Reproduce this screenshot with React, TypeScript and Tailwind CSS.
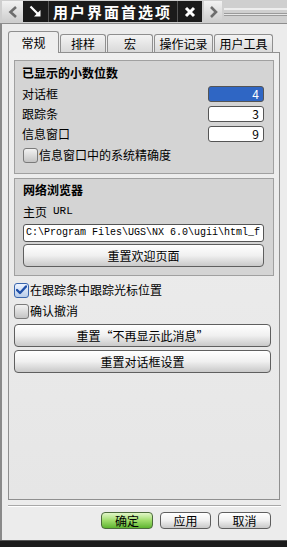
import type { ReactNode } from "react";

const cjk = { fontFamily: '"Noto Sans CJK SC", "Noto Sans", sans-serif' };

function Btn({ children, className = "" }: { children: ReactNode; className?: string }) {
  return (
    <div
      className={`flex items-center justify-center rounded-[4px] border border-[#5f5f5f] bg-gradient-to-b from-[#ffffff] via-[#f0f0f0] to-[#c9c9c9] text-[12px] leading-none text-black shadow-[inset_0_1px_0_#ffffff] ${className}`}
    >
      {children}
    </div>
  );
}

function Check({ checked = false }: { checked?: boolean }) {
  if (checked) {
    return (
      <div className="flex h-[15px] w-[15px] shrink-0 items-center justify-center rounded-[3px] border border-[#3a66ad] bg-gradient-to-b from-[#eef4ff] to-[#b9cde9]">
        <svg width="11" height="10" viewBox="0 0 11 10">
          <path d="M1 5 L4 8 L10 1.5" stroke="#1f4fa8" strokeWidth="2.4" fill="none" strokeLinecap="round" strokeLinejoin="round" />
        </svg>
      </div>
    );
  }
  return (
    <div className="h-[15px] w-[15px] shrink-0 rounded-[3px] border border-[#7a7a7a] bg-gradient-to-b from-[#f2f2f2] to-[#c4c4c4]" />
  );
}

function NumField({ value, selected = false }: { value: string; selected?: boolean }) {
  return (
    <div
      className={`flex h-[16px] w-[56px] items-center justify-end rounded-[3px] border border-[#555] pr-[4px] text-[12px] leading-none ${
        selected ? "bg-[#2f66c4] text-white" : "bg-white text-black"
      }`}
    >
      {value}
    </div>
  );
}

function Tab({ label, w, active = false }: { label: string; w: string; active?: boolean }) {
  return (
    <div
      className={`flex items-center justify-center rounded-t-[3px] border border-b-0 border-[#8f8f8f] text-[12px] leading-none text-black ${w} ${
        active
          ? "relative z-10 -mb-px h-[22px] bg-[#eeeeee]"
          : "h-[18px] bg-gradient-to-b from-[#f4f4f4] to-[#d9d9d9]"
      }`}
    >
      {label}
    </div>
  );
}

export default function App() {
  return (
    <div className="flex h-[547px] w-[287px] flex-col overflow-hidden bg-[#ececec]" style={cjk}>
      {/* title bar */}
      <div className="flex h-[24px] shrink-0 items-center border-b border-[#8d8d8d] bg-[#cfcfcf] pl-[2px]">
        <div className="flex h-[21px] w-[21px] items-center justify-center bg-gradient-to-b from-[#f2f2f2] to-[#cdcdcd]">
          <svg width="10" height="12" viewBox="0 0 10 12">
            <path d="M8 1 L2.5 6 L8 11" stroke="#6d6d6d" strokeWidth="2.6" fill="none" />
          </svg>
        </div>
        <div className="flex h-[21px] items-center bg-[#1b1b1b]">
          <div className="flex w-[24px] items-center justify-center">
            <svg width="13" height="13" viewBox="0 0 13 13">
              <path d="M1.5 1.5 L10 10" stroke="#fff" strokeWidth="2.2" />
              <path d="M5 11.5 L11.5 11.5 L11.5 5 Z" fill="#fff" />
            </svg>
          </div>
          <div className="ml-[1px] h-full w-px bg-[#555]" />
          <span className="w-[128px] pl-[4px] text-[15px] font-bold leading-none tracking-[2px] text-white">
            用户界面首选项
          </span>
          <div className="h-full w-px bg-[#555]" />
          <div className="flex w-[24px] items-center justify-center">
            <svg width="12" height="12" viewBox="0 0 12 12">
              <path d="M2 2 L10 10 M10 2 L2 10" stroke="#fff" strokeWidth="3" />
            </svg>
          </div>
        </div>
        <div className="ml-[2px] flex h-[21px] w-[18px] items-center justify-center bg-gradient-to-b from-[#f2f2f2] to-[#cdcdcd]">
          <svg width="9" height="12" viewBox="0 0 9 12">
            <path d="M2 1 L7 6 L2 11" stroke="#6d6d6d" strokeWidth="2.6" fill="none" />
          </svg>
        </div>
        <div className="ml-[2px] flex h-[21px] flex-1 flex-col justify-center gap-[3px]">
          <div className="h-[2px] bg-[#eeeeee]" />
          <div className="h-[3px] border-y border-[#9a9a9a] bg-[#e6e6e6]" />
        </div>
      </div>

      {/* body */}
      <div className="flex flex-1 flex-col border-l-2 border-[#8a8a8a] pl-[6px]">
        <div className="mt-[7px] flex items-end gap-px">
          <Tab label="常规" w="w-[51px]" active />
          <Tab label="排样" w="w-[46px]" />
          <Tab label="宏" w="w-[46px]" />
          <Tab label="操作记录" w="w-[59px]" />
          <Tab label="用户工具" w="w-[59px]" />
        </div>

        <div className="flex h-[448px] w-[272px] flex-col border border-[#8f8f8f] bg-gradient-to-b from-[#efefef] to-[#e6e6e6] px-[5px] pt-[7px] text-[12px] leading-none text-black">
          {/* decimal places group */}
          <div className="flex h-[114px] flex-col border border-[#a0a0a0] bg-[#d4d4d4] pl-[7px] pr-[9px]">
            <div className="flex h-[23px] items-center font-bold">已显示的小数位数</div>
            <div className="flex h-[20px] items-center justify-between">
              <span>对话框</span>
              <NumField value="4" selected />
            </div>
            <div className="flex h-[20px] items-center justify-between">
              <span>跟踪条</span>
              <NumField value="3" />
            </div>
            <div className="flex h-[20px] items-center justify-between">
              <span>信息窗口</span>
              <NumField value="9" />
            </div>
            <div className="flex h-[22px] items-center gap-[1px] pl-[1px]">
              <Check />
              <span>信息窗口中的系统精确度</span>
            </div>
          </div>

          {/* browser group */}
          <div className="mt-[4px] flex h-[98px] flex-col border border-[#a0a0a0] bg-[#d4d4d4] pl-[8px] pr-[9px]">
            <div className="flex h-[22px] items-center font-bold">网络浏览器</div>
            <div className="flex h-[21px] items-center">
              主页
              <span className="ml-[6px] text-[11px]" style={{ fontFamily: '"Liberation Mono", monospace' }}>
                URL
              </span>
            </div>
            <div
              className="mt-[2px] flex h-[18px] items-center overflow-hidden whitespace-nowrap rounded-[3px] border border-[#555] bg-white pl-[2px] text-[10px]"
              style={{ fontFamily: '"Liberation Mono", monospace' }}
            >
              C:\Program Files\UGS\NX 6.0\ugii\html_f
            </div>
            <Btn className="mt-[2px] h-[23px]">重置欢迎页面</Btn>
          </div>

          <div className="mt-[5px] flex h-[18px] items-center gap-[1px]">
            <Check checked />
            <span>在跟踪条中跟踪光标位置</span>
          </div>
          <div className="mt-[3px] flex h-[18px] items-center gap-[1px]">
            <Check />
            <span>确认撤消</span>
          </div>
          <Btn className="mt-[4px] h-[23px] w-[257px]">重置“不再显示此消息”</Btn>
          <Btn className="mt-[3px] h-[23px] w-[257px]">重置对话框设置</Btn>
        </div>

        <div className="mt-[5px] h-[2px] w-[273px] border-t border-[#a8a8a8] bg-white" />

        <div className="mt-[5px] flex w-[263px] justify-end gap-[7px]">
          <div className="flex h-[17px] w-[52px] items-center justify-center rounded-[4px] border border-[#4d6b3d] bg-gradient-to-b from-[#e2f7c8] via-[#9fdc6a] to-[#5eb52e] text-[12px] leading-none text-black">
            确定
          </div>
          <Btn className="h-[17px] w-[51px]">应用</Btn>
          <Btn className="h-[17px] w-[53px]">取消</Btn>
        </div>
        <div className="flex-1" />
      </div>

      <div className="h-[7px] shrink-0 border-t border-[#555] bg-[#1c1c1c]" />
    </div>
  );
}
